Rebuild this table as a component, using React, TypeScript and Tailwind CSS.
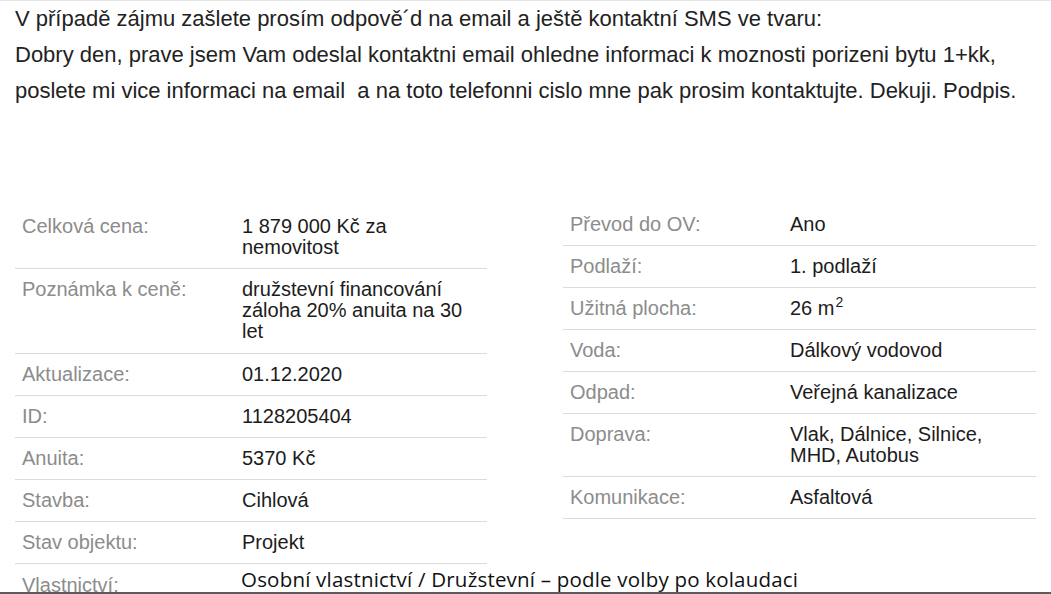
type Row = { label: string; value: React.ReactNode[]; extra?: string }

const leftRows: Row[] = [
  { label: 'Celková cena:', value: ['1 879 000 Kč za', 'nemovitost'] },
  { label: 'Poznámka k ceně:', value: ['družstevní financování', 'záloha 20% anuita na 30', 'let'], extra: 'pb-[11px]' },
  { label: 'Aktualizace:', value: ['01.12.2020'] },
  { label: 'ID:', value: ['1128205404'] },
  { label: 'Anuita:', value: ['5370 Kč'] },
  { label: 'Stavba:', value: ['Cihlová'] },
  { label: 'Stav objektu:', value: ['Projekt'] },
]

const rightRows: Row[] = [
  { label: 'Převod do OV:', value: ['Ano'] },
  { label: 'Podlaží:', value: ['1. podlaží'] },
  {
    label: 'Užitná plocha:',
    value: [
      <>
        26 m<sup className="-top-[8px] ml-[1px] text-[14px]">2</sup>
      </>,
    ],
  },
  { label: 'Voda:', value: ['Dálkový vodovod'] },
  { label: 'Odpad:', value: ['Veřejná kanalizace'] },
  { label: 'Doprava:', value: ['Vlak, Dálnice, Silnice,', 'MHD, Autobus'] },
  { label: 'Komunikace:', value: ['Asfaltová'] },
]

function ParamRow({ label, value, extra }: Row) {
  return (
    <div className={`flex border-b border-[#dcdcdc] py-[10px] leading-[21px] ${extra ?? ''}`}>
      <div className="w-[227px] shrink-0 pl-[7px] text-[#8c8c8c]">{label}</div>
      <div className="flex-1 text-[#1c1c1c]">
        {value.map((line, i) => (
          <div key={i}>{line}</div>
        ))}
      </div>
    </div>
  )
}

export default function App() {
  return (
    <div className="flex h-[594px] w-[1051px] flex-col overflow-hidden border-t border-[#e6e6e6] bg-white font-['Liberation_Sans',Arial,sans-serif] text-[20px]">
      <div className="flex-1 overflow-hidden">
        {/* Message text */}
        <div className="px-[15px] text-[22px] leading-[36px] text-[#222]">
          <p>V případě zájmu zašlete prosím odpově´d na email a ještě kontaktní SMS ve tvaru:</p>
          <p>Dobry den, prave jsem Vam odeslal kontaktni email ohledne informaci k moznosti porizeni bytu 1+kk,</p>
          <p>poslete mi vice informaci na email&nbsp; a na toto telefonni cislo mne pak prosim kontaktujte. Dekuji. Podpis.</p>
        </div>

        {/* Parameters */}
        <div className="mt-[95px] grid grid-cols-[472px_473px] gap-x-[76px] px-[15px]">
          <div className="pt-[2px]">
            {leftRows.map((r) => (
              <ParamRow key={r.label} {...r} />
            ))}
            <div className="flex leading-[21px]">
              <div className="w-[227px] shrink-0 pl-[7px] pt-[11px] text-[#8c8c8c]">Vlastnictví:</div>
              <div className="-ml-[1px] whitespace-nowrap pt-[5px] font-['Open_Sans',sans-serif] text-[20.5px] tracking-[0.2px] text-[#111]">
                Osobní vlastnictví / Družstevní – podle volby po kolaudaci
              </div>
            </div>
          </div>
          <div>
            {rightRows.map((r) => (
              <ParamRow key={r.label} {...r} />
            ))}
          </div>
        </div>
      </div>
      <div className="h-[2px] shrink-0 bg-[#5c5c5c]" />
    </div>
  )
}
